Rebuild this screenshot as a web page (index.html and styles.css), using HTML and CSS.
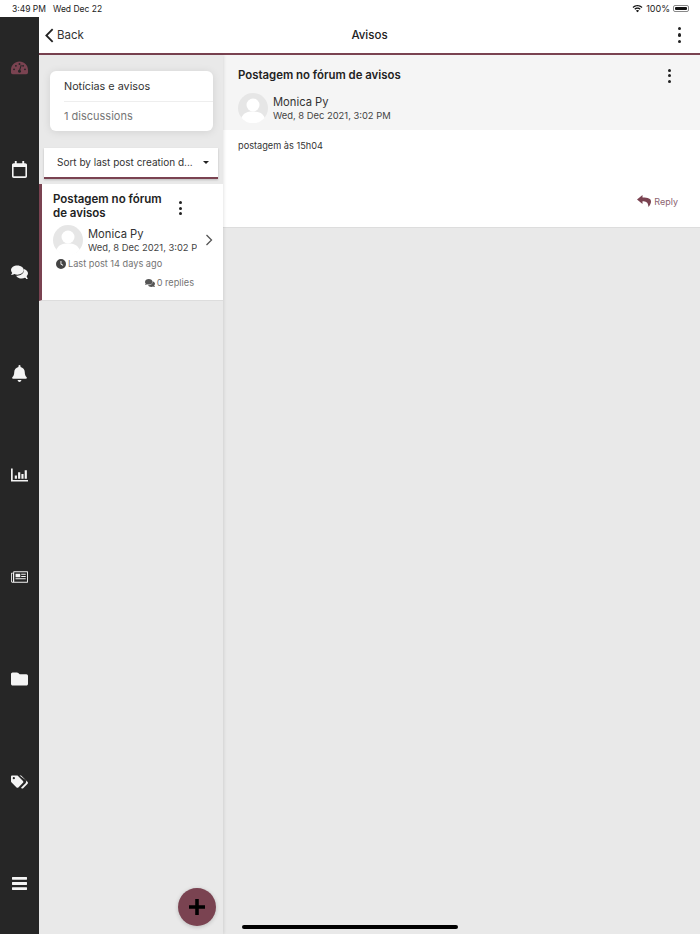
FILE: index.html
```html
<!DOCTYPE html>
<html lang="en">
<head>
    <meta charset="UTF-8">
    <title>Avisos</title>
    <link rel="stylesheet" href="styles.css">
</head>
<body>
<div class="status-bar">
    <span class="status-time">3:49 PM</span>
    <span class="status-date">Wed Dec 22</span>
    <span class="status-right">
        <svg class="wifi" viewBox="0 0 16 12"><path d="M8 1C5.200 1 2.700 2.100 .8 3.900L2 5.200C3.600 3.700 5.700 2.800 8 2.800s4.400.9 6 2.400l1.200-1.300C13.300 2.100 10.800 1 8 1z"/><path d="M8 4.700c-1.800 0-3.400.7-4.600 1.800l1.200 1.300C5.500 7 6.700 6.500 8 6.500s2.500.5 3.400 1.300l1.200-1.300C11.400 5.400 9.800 4.700 8 4.700z"/><path d="M8 8.300c-.9 0-1.700.3-2.300.9L8 11.600l2.300-2.400c-.6-.6-1.400-.9-2.300-.9z"/></svg>
        <span>100%</span>
        <span class="battery"><span class="battery-fill"></span></span>
    </span>
</div>
<div class="app">
    <nav class="sidebar">
        <svg class="nav-icon nav-active" viewBox="0 0 18 14"><path d="M9 0C4 0 0 3.900 0 8.800v3C0 12.900.9 13.500 1.800 13.500h14.400c.9 0 1.800-.6 1.800-1.700v-3C18 3.900 14 0 9 0zM9 1.800a1 1 0 110 2 1 1 0 010-2zM3.200 9.400a1 1 0 110-2 1 1 0 010 2zm2-3.700a1 1 0 110-2 1 1 0 010 2zm5.300 5.600a1.700 1.700 0 01-3.100-.9c0-.8.500-1.400 1.300-1.600l1.500-4.700c.1-.3.4-.5.700-.4s.5.400.4.700L9.800 9.100c.8.500 1.100 1.400.7 2.200zM12.800 5.700a1 1 0 110-2 1 1 0 010 2zm2 3.700a1 1 0 110-2 1 1 0 010 2z"/></svg>
        <svg class="nav-icon nav-narrow" viewBox="0 0 16 18"><path d="M3 0h2v2.200h6V0h2v2.200h1.200C15.200 2.200 16 3 16 4v12.200c0 1-.8 1.800-1.800 1.800H1.800C.8 18 0 17.200 0 16.200V4c0-1 .8-1.800 1.800-1.800H3V0zM1.700 6.200v10.100h12.600V6.200H1.700z"/></svg>
        <svg class="nav-icon" viewBox="0 0 18 14"><path d="M6.800 0C3 0 0 2.200 0 5c0 1.100.5 2.100 1.300 3-.4.900-1.100 1.700-1.100 1.700 0 .1-.1.200 0 .3.100.1.100.1.200.1 1.300 0 2.400-.5 3.100-1 1 .5 2.100.8 3.300.8 3.700 0 6.800-2.200 6.800-4.900S10.500 0 6.800 0z"/><path d="M16.700 11.300c.8-.8 1.300-1.800 1.300-2.900 0-2.100-1.800-3.900-4.300-4.600.1.400.1.800.1 1.200 0 3.300-3.300 6-7.400 6-.4 0-.7 0-1-.1 1 1.800 3.300 3.100 6 3.100 1.200 0 2.300-.3 3.300-.8.700.5 1.800 1 3.100 1 .1 0 .2 0 .2-.1.100-.1 0-.2 0-.3 0 0-.9-.7-1.300-1.500z"/></svg>
        <svg class="nav-icon nav-narrow" viewBox="0 0 16 18"><path d="M8 18c1.100 0 2-.9 2-2H6c0 1.100.9 2 2 2zM15.500 12.800c-.7-.7-1.900-1.800-1.900-5.300 0-2.700-1.900-4.900-4.500-5.400V1.100a1.100 1.100 0 00-2.200 0v1C4.300 2.600 2.400 4.800 2.400 7.500c0 3.500-1.200 4.600-1.900 5.300-.2.200-.3.500-.3.700 0 .6.500 1.100 1.100 1.100h13.400c.6 0 1.100-.5 1.100-1.100 0-.2-.1-.5-.3-.7z"/></svg>
        <svg class="nav-icon" viewBox="0 0 18 14"><path d="M0 0h1.800v12.200H18V14H0V0zM4 7.500h2.300V11H4V7.500zm3.500-3.500h2.300v7H7.500V4zM11 6h2.300v5H11V6zm3.500-4h2.300v9h-2.300V2z"/></svg>
        <svg class="nav-icon" viewBox="0 0 18 12"><path fill-rule="evenodd" d="M3 0h14.400c.4 0 .6.200.6.600v10.800c0 .4-.2.600-.6.600H1.500C.7 12 0 11.300 0 10.500V2.200c0-.4.300-.7.700-.7H2.400V.6C2.400.2 2.600 0 3 0zm.4 1v9.800c0 .2-.1.300-.2.200h13.800V1H3.400zM.9 2.400v8.100c0 .3.300.6.600.6s.6-.3.600-.6V2.400H.9zM4.800 2.500h5v3.800h-5V2.500zm6 .1h4.800v1.100h-4.800V2.600zm0 2.400h4.800v1.100h-4.800V5zM4.800 7.400h10.800v1.100H4.800V7.400z"/></svg>
        <svg class="nav-icon" viewBox="0 0 18 14"><path d="M1.700 0h4.600c.4 0 .8.200 1.100.5L9.200 2h7.100c.9 0 1.700.8 1.700 1.700v8.600c0 .9-.8 1.700-1.700 1.700H1.700C.8 14 0 13.200 0 12.300V1.700C0 .8.800 0 1.700 0z"/></svg>
        <svg class="nav-icon" viewBox="0 0 18 14"><path d="M0 1.300C0 .6.600 0 1.300 0h4.900c.4 0 .7.100 1 .4l5.500 5.500c.5.500.5 1.400 0 1.900l-4.900 4.900c-.5.500-1.400.5-1.900 0L.4 7.200C.1 6.900 0 6.600 0 6.200V1.300zm3 .5a1.200 1.200 0 100 2.400 1.200 1.200 0 000-2.400z"/><path d="M9 0h1c.4 0 .7.100 1 .4l6.600 6.500c.5.500.5 1.400 0 1.900l-4.700 4.700c-.5.500-1.300.5-1.800 0l-.5-.5 4.800-4.800c.9-.9.900-2.300 0-3.200L9 0z"/></svg>
        <svg class="nav-icon nav-narrow" viewBox="0 0 16 14"><path d="M.5 0h15c.3 0 .5.200.5.500v2c0 .3-.2.500-.5.500H.5C.2 3 0 2.800 0 2.500v-2C0 .2.200 0 .5 0zm0 5.500h15c.3 0 .5.200.5.500v2c0 .3-.2.500-.5.500H.5C.2 8.500 0 8.300 0 8V6c0-.3.200-.5.500-.5zm0 5.500h15c.3 0 .5.200.5.500v2c0 .3-.2.500-.5.500H.5c-.3 0-.5-.2-.5-.5v-2c0-.3.200-.5.500-.5z"/></svg>
    </nav>
    <div class="main">
        <header class="top-bar">
            <a class="back">
                <svg class="back-chevron" viewBox="0 0 10 16"><path d="M8.500 1L1.500 8l7 7" fill="none" stroke="#222" stroke-width="2"/></svg>
                <span>Back</span>
            </a>
            <h1 class="page-title">Avisos</h1>
            <span class="dots dots-top"><i></i><i></i><i></i></span>
        </header>
        <div class="panes">
            <section class="list-pane">
                <div class="forum-card">
                    <div class="forum-name">Notícias e avisos</div>
                    <div class="forum-count">1 discussions</div>
                </div>
                <div class="sort-select">
                    <span>Sort by last post creation d...</span>
                    <span class="caret"></span>
                </div>
                <article class="discussion">
                    <div class="discussion-head">
                        <h2 class="discussion-title">Postagem no fórum de avisos</h2>
                        <span class="dots dots-small"><i></i><i></i><i></i></span>
                    </div>
                    <div class="discussion-author">
                        <svg class="avatar" viewBox="0 0 30 30"><use href="#person"/></svg>
                        <div class="author-text">
                            <div class="author-name">Monica Py</div>
                            <div class="author-date">Wed, 8 Dec 2021, 3:02 PM</div>
                        </div>
                        <svg class="row-chevron" viewBox="0 0 8 12"><path d="M1.500 1l5 5-5 5" fill="none" stroke="#555" stroke-width="1.300"/></svg>
                    </div>
                    <div class="last-post">
                        <svg class="small-icon" viewBox="0 0 10 10"><path fill="#444" fill-rule="evenodd" d="M5 0a5 5 0 110 10A5 5 0 015 0zM4.500 2v3.300l2.300 1.400.5-.7-1.900-1.200V2h-.9z"/></svg>
                        <span>Last post 14 days ago</span>
                    </div>
                    <div class="reply-count">
                        <svg class="small-icon" viewBox="0 0 18 14"><path fill="#555" d="M6.800 0C3 0 0 2.200 0 5c0 1.100.5 2.100 1.300 3-.4.900-1.100 1.700-1.100 1.700 0 .1-.1.200 0 .3.100.1.100.1.200.1 1.300 0 2.400-.5 3.100-1 1 .5 2.100.8 3.300.8 3.700 0 6.800-2.200 6.800-4.900S10.500 0 6.800 0z"/><path fill="#555" d="M16.700 11.300c.8-.8 1.300-1.800 1.300-2.900 0-2.100-1.800-3.900-4.300-4.600.1.400.1.800.1 1.200 0 3.300-3.300 6-7.400 6-.4 0-.7 0-1-.1 1 1.800 3.300 3.100 6 3.100 1.200 0 2.300-.3 3.300-.8.700.5 1.800 1 3.100 1 .1 0 .2 0 .2-.1.100-.1 0-.2 0-.3 0 0-.9-.7-1.300-1.500z"/></svg>
                        <span>0 replies</span>
                    </div>
                </article>
                <button class="fab">
                    <svg viewBox="0 0 18 18"><path d="M7 0h4v7h7v4h-7v7H7v-7H0V7h7V0z"/></svg>
                </button>
            </section>
            <section class="detail-pane">
                <div class="post">
                    <div class="post-head">
                        <div class="post-title-row">
                            <h2 class="post-title">Postagem no fórum de avisos</h2>
                            <span class="dots dots-small"><i></i><i></i><i></i></span>
                        </div>
                        <div class="post-author">
                            <svg class="avatar" viewBox="0 0 30 30"><use href="#person"/></svg>
                            <div class="author-text">
                                <div class="author-name">Monica Py</div>
                                <div class="author-date">Wed, 8 Dec 2021, 3:02 PM</div>
                            </div>
                        </div>
                    </div>
                    <div class="post-body">
                        <p class="post-text">postagem às 15h04</p>
                        <a class="reply">
                            <svg class="reply-icon" viewBox="0 0 14 12"><path d="M5.500 0L0 4.500 5.500 9V6.300C8.700 6.300 11 6.800 11.500 12c1.800-2.200 2.500-4 2.500-5.500 0-3-2.800-4-8.500-4V0z"/></svg>
                            <span>Reply</span>
                        </a>
                    </div>
                </div>
            </section>
        </div>
    </div>
</div>
<div class="home-indicator"></div>
<svg class="defs" width="0" height="0">
    <symbol id="person" viewBox="0 0 30 30">
        <circle cx="15" cy="15" r="15" fill="#e6e6e6"/>
        <circle cx="15" cy="12" r="6.500" fill="#fff"/>
        <path d="M3.500 25c1.500-5 5.500-6.500 11.500-6.500s10 1.500 11.500 6.500a15 15 0 01-23 0z" fill="#fff"/>
    </symbol>
</svg>
</body>
</html>
```
FILE: styles.css
```css
* {
    box-sizing: border-box;
}

html, body {
    margin: 0;
    height: 100%;
}

body {
    display: flex;
    flex-direction: column;
    height: 934px;
    overflow: hidden;
    font-family: Inter, Roboto, "Liberation Sans", sans-serif;
    color: #222222;
    background: #ffffff;
}

h1, h2, p {
    margin: 0;
}

.defs {
    position: absolute;
}

.status-bar {
    display: flex;
    align-items: center;
    flex: 0 0 17px;
    padding: 0 12px;
    font-size: 8.500px;
    color: #222222;
}

.status-date {
    margin-left: 7px;
}

.status-right {
    display: flex;
    align-items: center;
    gap: 3px;
    margin-left: auto;
    margin-right: -1px;
    font-size: 9px;
}

.wifi {
    width: 11px;
    height: 9px;
    fill: #111111;
}

.battery {
    width: 16px;
    height: 7px;
    padding: 1px;
    border-radius: 2px;
    border: 1px solid #888888;
    display: flex;
}

.battery-fill {
    flex: 1;
    background: #111111;
    border-radius: 1px;
}

.app {
    display: flex;
    flex: 1;
    min-height: 0;
}

.sidebar {
    display: flex;
    flex-direction: column;
    justify-content: space-around;
    align-items: center;
    flex: 0 0 39px;
    background: #262626;
}

.nav-icon {
    width: 17px;
    height: 18px;
    fill: #f4f4f4;
}

.nav-narrow {
    width: 15px;
    height: 17px;
}

.nav-active {
    fill: #7a4351;
}

.main {
    display: flex;
    flex-direction: column;
    flex: 1;
    min-width: 0;
}

.top-bar {
    display: grid;
    grid-template-columns: 1fr auto 1fr;
    align-items: center;
    flex: 0 0 38px;
    padding: 0 19px;
    border-bottom: 2px solid #7a4351;
    background: #ffffff;
}

.back {
    display: flex;
    align-items: center;
    gap: 3px;
    margin-left: -13px;
    font-size: 11.500px;
    color: #333333;
}

.back-chevron {
    width: 9px;
    height: 15px;
}

.page-title {
    font-size: 11.500px;
    font-weight: 500;
    color: #222222;
}

.dots {
    display: flex;
    flex-direction: column;
    align-items: center;
}

.dots-top {
    justify-self: end;
}

.dots i {
    display: block;
    border-radius: 50%;
    background: #222222;
}

.dots-top {
    gap: 3px;
}

.dots-top i {
    width: 3.500px;
    height: 3.500px;
}

.dots-small {
    gap: 2.500px;
}

.dots-small i {
    width: 3px;
    height: 3px;
}

.panes {
    display: flex;
    flex: 1;
    min-height: 0;
}

.list-pane {
    position: relative;
    display: flex;
    flex-direction: column;
    flex: 0 0 184px;
    background: #e9e9e9;
    box-shadow: 1px 0 3px rgba(0, 0, 0, 0.1);
    z-index: 1;
}

.forum-card {
    margin: 16px 10px 0 11px;
    padding-left: 14px;
    background: #ffffff;
    border-radius: 6px;
    box-shadow: 0 1px 8px rgba(0, 0, 0, 0.1);
}

.forum-name {
    height: 31px;
    line-height: 31px;
    font-size: 10.800px;
    color: #333333;
    border-bottom: 1px solid #eeeeee;
}

.forum-count {
    height: 29px;
    line-height: 29px;
    font-size: 11px;
    color: #767676;
}

.sort-select {
    display: flex;
    align-items: center;
    justify-content: space-between;
    height: 31px;
    margin: 17px 5px 0;
    padding: 0 9px 1px 13px;
    font-size: 10px;
    color: #333333;
    background: #ffffff;
    border-bottom: 2px solid #7a4351;
    box-shadow: 0 1px 2px rgba(0, 0, 0, 0.2);
}

.caret {
    border-left: 3.500px solid transparent;
    border-right: 3.500px solid transparent;
    border-top: 3.500px solid #222222;
}

.discussion {
    height: 117px;
    margin-top: 5px;
    padding: 9px 6px 0 11px;
    background: #ffffff;
    border-left: 3px solid #7a4351;
    border-bottom: 1px solid #dddddd;
}

.discussion-head {
    display: flex;
    align-items: flex-start;
}

.discussion-title {
    width: 120px;
    font-size: 11.500px;
    line-height: 13.500px;
    font-weight: 600;
    color: #222222;
}

.discussion-head .dots {
    margin: 8px 0 0 6px;
}

.discussion-author {
    display: flex;
    align-items: center;
    margin-top: 5px;
}

.discussion-author .author-text {
    flex: 0 0 109px;
    overflow: hidden;
}

.avatar {
    flex: 0 0 30px;
    width: 30px;
    height: 30px;
    margin-right: 5px;
}

.author-text {
    white-space: nowrap;
}

.author-name {
    font-size: 11.200px;
    line-height: 15px;
    padding-top: 1px;
    color: #333333;
}

.author-date {
    font-size: 9.400px;
    line-height: 12px;
    color: #444444;
}

.row-chevron {
    width: 8px;
    height: 12px;
    margin-left: 8px;
}

.last-post {
    display: flex;
    align-items: center;
    gap: 2px;
    margin: 3px 0 0 3px;
    font-size: 9.200px;
    line-height: 12px;
    color: #737373;
}

.small-icon {
    width: 10px;
    height: 10px;
}

.reply-count {
    display: flex;
    align-items: center;
    justify-content: flex-end;
    gap: 2px;
    margin: 7px 23px 0 0;
    font-size: 9.200px;
    line-height: 12px;
    color: #737373;
}

.fab {
    position: absolute;
    left: 139px;
    bottom: 8px;
    display: flex;
    align-items: center;
    justify-content: center;
    width: 38px;
    height: 38px;
    padding: 0;
    border: 0;
    border-radius: 50%;
    background: #7a4351;
    box-shadow: 0 1px 4px rgba(0, 0, 0, 0.2);
}

.fab svg {
    width: 16px;
    height: 16px;
    fill: #000000;
}

.detail-pane {
    flex: 1;
    background: #e9e9e9;
}

.post {
    background: #ffffff;
    border-bottom: 1px solid #dddddd;
}

.post-head {
    height: 75px;
    padding: 13px 29px 0 15px;
    background: #f5f5f5;
}

.post-title-row {
    display: flex;
    align-items: center;
    justify-content: space-between;
}

.post-title {
    font-size: 11.400px;
    line-height: 15px;
    font-weight: 600;
    color: #222222;
}

.post-author {
    display: flex;
    align-items: center;
    margin-top: 10px;
}

.post-body {
    height: 97px;
    padding: 10px 22px 0 15px;
}

.post-text {
    font-size: 9.200px;
    line-height: 12px;
    color: #333333;
}

.reply {
    display: flex;
    align-items: center;
    justify-content: flex-end;
    gap: 3px;
    margin-top: 43px;
    font-size: 9px;
    color: #8c6370;
}

.reply-icon {
    width: 14px;
    height: 12px;
    fill: #7a4351;
}

.home-indicator {
    position: absolute;
    left: 242px;
    bottom: 5px;
    width: 216px;
    height: 4px;
    border-radius: 2px;
    background: #000000;
    z-index: 2;
}
```
